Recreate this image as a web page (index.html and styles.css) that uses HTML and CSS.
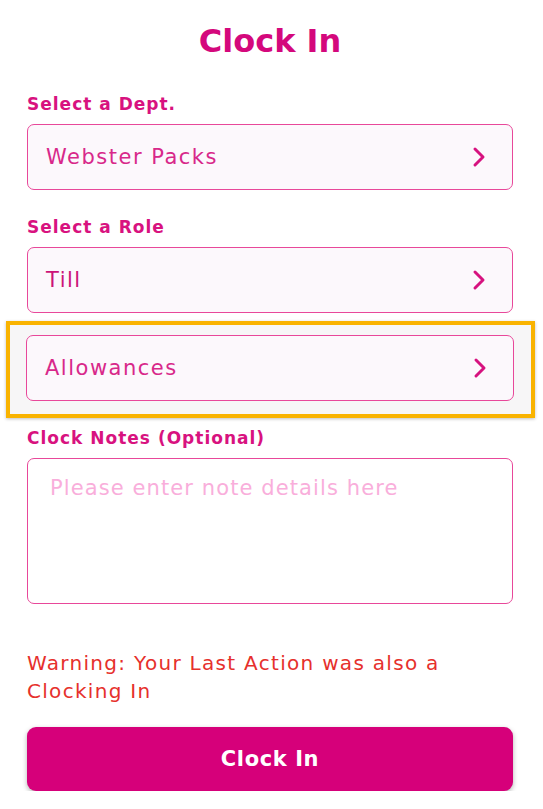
FILE: index.html
```html
<!DOCTYPE html>
<html lang="en">
<head>
<meta charset="UTF-8">
<meta name="viewport" content="width=device-width, initial-scale=1.0">
<title>Clock In</title>
<link rel="stylesheet" href="styles.css">
</head>
<body>
  <div class="page">
    <h1 class="title">Clock In</h1>

    <label class="field-label first">Select a Dept.</label>
    <div class="picker">
      <span class="picker-text">Webster Packs</span>
      <svg class="chevron" width="14" height="22" viewBox="0 0 14 22"><path d="M3 3 L11 11 L3 19" fill="none" stroke="#d6127f" stroke-width="3" stroke-linecap="round" stroke-linejoin="round"/></svg>
    </div>

    <label class="field-label">Select a Role</label>
    <div class="picker">
      <span class="picker-text strong">Till</span>
      <svg class="chevron" width="14" height="22" viewBox="0 0 14 22"><path d="M3 3 L11 11 L3 19" fill="none" stroke="#d6127f" stroke-width="3" stroke-linecap="round" stroke-linejoin="round"/></svg>
    </div>

    <div class="highlight">
      <div class="picker">
        <span class="picker-text">Allowances</span>
        <svg class="chevron" width="14" height="22" viewBox="0 0 14 22"><path d="M3 3 L11 11 L3 19" fill="none" stroke="#d6127f" stroke-width="3" stroke-linecap="round" stroke-linejoin="round"/></svg>
      </div>
    </div>

    <label class="field-label notes-label">Clock Notes (Optional)</label>
    <textarea class="notes" placeholder="Please enter note details here"></textarea>

    <p class="warning">Warning: Your Last Action was also a Clocking In</p>

    <button class="clock-btn">Clock In</button>
  </div>
</body>
</html>
```

FILE: styles.css
```css
body {
  margin: 0;
  padding: 0;
  background-color: #fff;
  font-family: "DejaVu Sans", "Noto Sans", sans-serif;
}

.page {
  display: flex;
  flex-direction: column;
  padding: 0 30px 0 27px;
}

/* Header */
.title {
  margin: 20px 0 0;
  text-align: center;
  font-size: 32px;
  line-height: 42px;
  font-weight: bold;
  color: #d4087c;
}

.field-label {
  margin-top: 26px;
  font-size: 17px;
  line-height: 22px;
  font-weight: bold;
  letter-spacing: 1px;
  color: #d8127f;
}

.field-label.first {
  margin-top: 31px;
}

/* Select rows */
.picker {
  display: flex;
  align-items: center;
  justify-content: space-between;
  height: 66px;
  box-sizing: border-box;
  margin-top: 9px;
  padding: 0 26px 0 18px;
  border: 1.5px solid #e8489a;
  border-radius: 7px;
  background-color: #fcf8fc;
}

.picker-text {
  font-size: 21px;
  letter-spacing: 1.5px;
  color: #d8288a;
}

.picker-text.strong {
  color: #cc1478;
}

.highlight {
  margin: 8px -22px 0 -21px;
  padding: 10px 17px 13px 16px;
  border: 4.5px solid #f9b300;
  background-color: #f7f6f7;
  box-shadow: 0 1px 3px rgba(0, 0, 0, 0.25);
}

.highlight .picker {
  margin-top: 0;
}

.notes-label {
  margin-top: 9px;
}

.notes {
  height: 146px;
  box-sizing: border-box;
  margin-top: 9px;
  padding: 17px 22px;
  border: 1.5px solid #e8489a;
  border-radius: 7px;
  background-color: #fff;
  font-family: inherit;
  font-size: 21px;
  letter-spacing: 1.1px;
  resize: none;
}

.notes::placeholder {
  color: #f9aedb;
}

.warning {
  margin: 45px 0 0;
  font-size: 20px;
  line-height: 28px;
  letter-spacing: 1.3px;
  color: #e6302c;
}

.clock-btn {
  height: 64px;
  margin-top: 22px;
  border: none;
  border-radius: 9px;
  background-color: #d6007a;
  color: #fff;
  font-family: inherit;
  font-size: 21px;
  font-weight: bold;
  letter-spacing: 0.6px;
  box-shadow: 0 2px 5px rgba(0, 0, 0, 0.3);
}
```
